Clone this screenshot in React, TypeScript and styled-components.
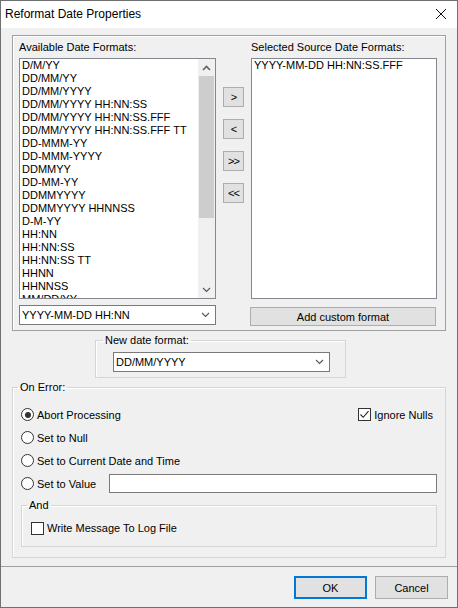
import React from "react";
import styled, { createGlobalStyle } from "styled-components";

const GlobalStyle = createGlobalStyle`
  html, body {
    margin: 0;
    padding: 0;
    background: #ffffff;
  }
  body {
    font-family: "Liberation Sans", Arial, sans-serif;
    font-size: 11px;
    color: #000;
  }
  * {
    box-sizing: border-box;
  }
`;

const availableFormats = [
  "D/M/YY",
  "DD/MM/YY",
  "DD/MM/YYYY",
  "DD/MM/YYYY HH:NN:SS",
  "DD/MM/YYYY HH:NN:SS.FFF",
  "DD/MM/YYYY HH:NN:SS.FFF TT",
  "DD-MMM-YY",
  "DD-MMM-YYYY",
  "DDMMYY",
  "DD-MM-YY",
  "DDMMYYYY",
  "DDMMYYYY HHNNSS",
  "D-M-YY",
  "HH:NN",
  "HH:NN:SS",
  "HH:NN:SS TT",
  "HHNN",
  "HHNNSS",
  "MM/DD/YY",
];

const Chevron = ({ up }: { up?: boolean }) => (
  <svg width="9" height="6" viewBox="0 0 9 6">
    <path
      d={up ? "M1 5 L4.5 1.5 L8 5" : "M1 1 L4.5 4.5 L8 1"}
      fill="none"
      stroke={up ? "#606060" : "#555"}
      strokeWidth={up ? 1.6 : 1.1}
    />
  </svg>
);

const ComboBox = ({ value, width }: { value: string; width: number }) => (
  <Combo $width={width}>
    <span>{value}</span>
    <Chevron />
  </Combo>
);

const Radio = ({ checked, label }: { checked?: boolean; label: string }) => (
  <OptionLabel>
    <RadioCircle>{checked && <RadioDot />}</RadioCircle>
    {label}
  </OptionLabel>
);

const Check = ({ checked, label, className }: { checked?: boolean; label: string; className?: string }) => (
  <OptionLabel className={className}>
    <CheckBox>
      {checked && (
        <svg width="11" height="11" viewBox="0 0 11 11">
          <path d="M1.5 5.5 L4.2 8.3 L9.5 2.2" fill="none" stroke="#222" strokeWidth="1.1" />
        </svg>
      )}
    </CheckBox>
    {label}
  </OptionLabel>
);

const App = () => {
  return (
    <>
      <GlobalStyle />
      <Window>
        <TitleBar>
          <Title>Reformat Date Properties</Title>
          <svg width="10" height="10" viewBox="0 0 10 10">
            <path d="M0 0 L10 10 M10 0 L0 10" stroke="#111" strokeWidth="1" />
          </svg>
        </TitleBar>

        <Body>
          <FormatPanel>
            <Column $width={197}>
              <Caption>Available Date Formats:</Caption>
              <ListBox>
                <ListItems>
                  {availableFormats.map((f) => (
                    <Item key={f}>{f}</Item>
                  ))}
                </ListItems>
                <ScrollBar>
                  <ScrollArrow>
                    <Chevron up />
                  </ScrollArrow>
                  <Thumb />
                  <Track />
                  <ScrollArrow>
                    <Chevron />
                  </ScrollArrow>
                </ScrollBar>
              </ListBox>
              <ComboGap>
                <ComboBox value="YYYY-MM-DD HH:NN" width={197} />
              </ComboGap>
            </Column>

            <MoveButtons>
              <SmallButton>&gt;</SmallButton>
              <SmallButton>&lt;</SmallButton>
              <SmallButton>&gt;&gt;</SmallButton>
              <SmallButton>&lt;&lt;</SmallButton>
            </MoveButtons>

            <Column $width={186}>
              <Caption>Selected Source Date Formats:</Caption>
              <ListBox>
                <ListItems>
                  <Item>YYYY-MM-DD HH:NN:SS.FFF</Item>
                </ListItems>
              </ListBox>
              <AddButton>Add custom format</AddButton>
            </Column>
          </FormatPanel>

          <NewFormatGroup>
            <Legend $offset={7}>New date format:</Legend>
            <NewFormatInner>
              <ComboBox value="DD/MM/YYYY" width={217} />
            </NewFormatInner>
          </NewFormatGroup>

          <ErrorGroup>
            <Legend $offset={5}>On Error:</Legend>
            <ErrorInner>
              <OptionRow>
                <Radio checked label="Abort Processing" />
                <IgnoreNulls checked label="Ignore Nulls" />
              </OptionRow>
              <OptionRow>
                <Radio label="Set to Null" />
              </OptionRow>
              <OptionRow>
                <Radio label="Set to Current Date and Time" />
              </OptionRow>
              <OptionRow>
                <Radio label="Set to Value" />
                <TextInput />
              </OptionRow>

              <AndGroup>
                <Legend $offset={5}>And</Legend>
                <AndInner>
                  <Check label="Write Message To Log File" />
                </AndInner>
              </AndGroup>
            </ErrorInner>
          </ErrorGroup>
        </Body>

        <Footer>
          <DialogButton $default>OK</DialogButton>
          <DialogButton>Cancel</DialogButton>
        </Footer>
      </Window>
    </>
  );
};

const Window = styled.div`
  width: 458px;
  height: 608px;
  border: 1px solid #707070;
  background: #f0f0f0;
  display: flex;
  flex-direction: column;
`;

const TitleBar = styled.div`
  height: 27px;
  background: #ffffff;
  display: flex;
  align-items: center;
  justify-content: space-between;
  padding: 0 11px 2px 4px;
`;

const Title = styled.span`
  font-size: 12px;
  color: #000;
`;

const Body = styled.div`
  display: flex;
  flex-direction: column;
  padding: 7px 11px 0 11px;
`;

const FormatPanel = styled.div`
  width: 434px;
  height: 296px;
  border: 1px solid #a0a0a0;
  box-shadow: inset 1px 1px 0 #ffffff;
  display: flex;
  gap: 7px;
  padding: 5px 8px 0 6px;
`;

const Column = styled.div<{ $width: number }>`
  width: ${(p) => p.$width}px;
  display: flex;
  flex-direction: column;
`;

const Caption = styled.div`
  line-height: 13px;
  height: 13px;
  margin-bottom: 4px;
  white-space: nowrap;
`;

const ListBox = styled.div`
  height: 241px;
  border: 1px solid #828790;
  background: #ffffff;
  display: flex;
  overflow: hidden;
`;

const ListItems = styled.div`
  flex: 1;
  padding: 0 2px;
  overflow: hidden;
`;

const Item = styled.div`
  height: 13px;
  line-height: 13px;
  white-space: nowrap;
`;

const ScrollBar = styled.div`
  width: 17px;
  display: flex;
  flex-direction: column;
  background: #f0f0f0;
`;

const ScrollArrow = styled.div`
  height: 17px;
  display: flex;
  align-items: center;
  justify-content: center;
`;

const Thumb = styled.div`
  height: 142px;
  margin: 0 1px;
  background: #cdcdcd;
`;

const Track = styled.div`
  flex: 1;
`;

const ComboGap = styled.div`
  margin-top: 6px;
`;

const Combo = styled.div<{ $width: number }>`
  width: ${(p) => p.$width}px;
  height: 20px;
  border: 1px solid #7a7a7a;
  background: #ffffff;
  display: flex;
  align-items: center;
  justify-content: space-between;
  padding: 0 5px 0 2px;
  white-space: nowrap;
`;

const MoveButtons = styled.div`
  width: 21px;
  display: flex;
  flex-direction: column;
  gap: 12px;
  padding-top: 46px;
`;

const SmallButton = styled.div`
  width: 21px;
  height: 20px;
  border: 1px solid #adadad;
  background: #e1e1e1;
  display: flex;
  align-items: center;
  justify-content: center;
  font-size: 11px;
  letter-spacing: -1px;
`;

const AddButton = styled.div`
  width: 186px;
  height: 19px;
  margin: 8px 0 0 -1px;
  border: 1px solid #adadad;
  background: #e1e1e1;
  display: flex;
  align-items: center;
  justify-content: center;
`;

const Group = styled.fieldset`
  margin: 0;
  padding: 0;
  min-width: 0;
  border: 1px solid #d5d5d5;
  box-shadow: inset 1px 1px 0 #ffffff;
`;

const Legend = styled.legend<{ $offset: number }>`
  margin-left: ${(p) => p.$offset}px;
  padding: 0 2px;
  line-height: 13px;
  font-size: 11px;
`;

const NewFormatGroup = styled(Group)`
  width: 251px;
  margin: 3px 0 0 83px;
`;

const NewFormatInner = styled.div`
  padding: 5px 0 5px 17px;
`;

const ErrorGroup = styled(Group)`
  width: 434px;
  margin: 3px 0 8px 0;
`;

const ErrorInner = styled.div`
  padding: 9px 8px 10px 8px;
  display: flex;
  flex-direction: column;
`;

const OptionRow = styled.div`
  height: 23px;
  display: flex;
  align-items: center;
`;

const OptionLabel = styled.label`
  display: flex;
  align-items: center;
  gap: 3px;
  white-space: nowrap;
`;

const RadioCircle = styled.span`
  width: 13px;
  height: 13px;
  border-radius: 50%;
  border: 1px solid #333;
  background: #ffffff;
  display: flex;
  align-items: center;
  justify-content: center;
`;

const RadioDot = styled.span`
  width: 6px;
  height: 6px;
  border-radius: 50%;
  background: #333;
`;

const CheckBox = styled.span`
  width: 13px;
  height: 13px;
  border: 1px solid #333;
  background: #ffffff;
  display: flex;
  align-items: center;
  justify-content: center;
`;

const IgnoreNulls = styled(Check)`
  margin-left: auto;
  margin-right: 4px;
`;

const TextInput = styled.div`
  width: 328px;
  height: 19px;
  margin-left: auto;
  border: 1px solid #7a7a7a;
  background: #ffffff;
`;

const AndGroup = styled(Group)`
  margin-top: 4px;
`;

const AndInner = styled.div`
  height: 34px;
  padding: 6px 0 8px 9px;
  display: flex;
  align-items: center;
`;

const Footer = styled.div`
  flex: 1;
  border-top: 1px solid #a0a0a0;
  display: flex;
  justify-content: flex-end;
  align-items: flex-start;
  gap: 8px;
  padding: 9px 9px 0 0;
`;

const DialogButton = styled.div<{ $default?: boolean }>`
  width: 73px;
  height: 23px;
  background: #e1e1e1;
  border: 1px solid ${(p) => (p.$default ? "#0078d7" : "#adadad")};
  box-shadow: ${(p) => (p.$default ? "inset 0 0 0 1px #0078d7" : "none")};
  display: flex;
  align-items: center;
  justify-content: center;
`;

export default App;
